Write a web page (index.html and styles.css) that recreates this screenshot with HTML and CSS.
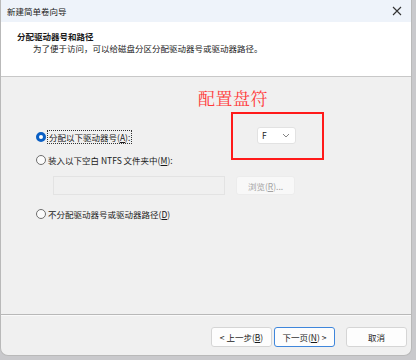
FILE: index.html
```html
<!DOCTYPE html>
<html lang="zh-CN">
    <head>
        <meta charset="UTF-8">
        <title> 新建简单卷向导 </title>
        <link rel="stylesheet" href="styles.css">
    </head>

    <body>
        <div class="window">
            <div class="titlebar">
                <span class="title">新建简单卷向导</span>
                <svg class="close" width="10" height="10" viewBox="0 0 10 10">
                    <path d="M1 1 L9 9 M9 1 L1 9" stroke="#333" stroke-width="1.1"/>
                </svg>
            </div>

            <div class="header">
                <div class="header-title">分配驱动器号和路径</div>
                <div class="header-sub">为了便于访问，可以给磁盘分区分配驱动器号或驱动器路径。</div>
            </div>

            <div class="content">
                <div class="note">配置盘符</div>
                <div class="note-box"> </div>

                <div class="row">
                    <div class="option">
                        <span class="radio checked"> </span>
                        <span class="focus">分配以下驱动器号(<u>A</u>):</span>
                    </div>
                    <div class="select">
                        <span>F</span>
                        <svg width="8" height="5" viewBox="0 0 8 5">
                            <path d="M1 1 L4 4 L7 1" fill="none" stroke="#777" stroke-width="0.9"/>
                        </svg>
                    </div>
                </div>

                <div class="row">
                    <div class="option">
                        <span class="radio"> </span>
                        <span>装入以下空白 NTFS 文件夹中(<u>M</u>):</span>
                    </div>
                </div>

                <div class="path-row">
                    <div class="path-input"> </div>
                    <div class="btn disabled">浏览(<u>R</u>)...</div>
                </div>

                <div class="row">
                    <div class="option">
                        <span class="radio"> </span>
                        <span>不分配驱动器号或驱动器路径(<u>D</u>)</span>
                    </div>
                </div>
            </div>

            <div class="footer">
                <div class="btn back">&lt; 上一步(<u>B</u>)</div>
                <div class="btn next">下一页(<u>N</u>) &gt;</div>
                <div class="btn cancel">取消</div>
            </div>
        </div>
    </body>
</html>
```

FILE: styles.css
```css
* {
    padding: 0;
    margin: 0;
    box-sizing: border-box;
}

body {
    background: #c9c9cc;
    font-family: "Noto Sans CJK SC", "Noto Sans", sans-serif;
    font-size: 8.5px;
    color: #1a1a1a;
    width: 416px;
    height: 360px;
    overflow: hidden;
}

.window {
    width: 412px;
    height: 356px;
    border: 1px solid #b9b9b9;
    border-top: none;
    border-radius: 0 0 8px 8px;
    overflow: hidden;
    display: flex;
    flex-direction: column;
    background: #f0f0f0;
}

.titlebar {
    height: 22px;
    background: #eef3fa;
    display: flex;
    align-items: center;
    justify-content: space-between;
    padding: 0 9px 0 6px;
    flex-shrink: 0;
}

.title {
    color: #222;
}

.header {
    height: 55px;
    background: #ffffff;
    border-bottom: 1px solid #c8c8c8;
    padding: 8px 0 0 16px;
    flex-shrink: 0;
}

.header-title {
    font-weight: bold;
    line-height: 12px;
}

.header-sub {
    padding-left: 16px;
    line-height: 12px;
    color: #222;
}

.content {
    position: relative;
    flex: 1;
    padding: 51px 0 0 35px;
}

.note {
    position: absolute;
    left: 197px;
    top: 8px;
    font-size: 17px;
    color: #ff3b3b;
    font-family: "Noto Serif CJK SC", "Noto Sans CJK SC", serif;
    letter-spacing: 0.5px;
}

.note-box {
    position: absolute;
    left: 230px;
    top: 35px;
    width: 93px;
    height: 48px;
    border: 2px solid #ff1a1a;
}

.row {
    display: flex;
    align-items: center;
    height: 18px;
}

.row + .row {
    margin-top: 5px;
}

.option {
    display: flex;
    align-items: center;
    gap: 2px;
    width: 221px;
}

.radio {
    width: 10px;
    height: 10px;
    border-radius: 50%;
    border: 1px solid #6e6e6e;
    background: #fbfbfb;
    flex-shrink: 0;
}

.radio.checked {
    border: 3px solid #0a5fc4;
    background: #ffffff;
}

.focus {
    outline: 1px dotted #333;
    padding: 0 1px;
}

.select {
    width: 39px;
    height: 17px;
    margin-top: -4px;
    background: #ffffff;
    border: 1px solid #e2e2e2;
    border-radius: 3px;
    display: flex;
    align-items: center;
    justify-content: space-between;
    padding: 0 5px 0 4px;
}

.path-row {
    display: flex;
    gap: 11px;
    margin: 7px 0 0 17px;
    height: 19px;
}

.path-input {
    width: 172px;
    border: 1px solid #e3e3e3;
    background: #f0f0f0;
}

.path-row + .row {
    margin-top: 10px;
}

.btn {
    display: flex;
    align-items: center;
    justify-content: center;
    background: #fdfdfd;
    border: 1px solid #d5d5d5;
    border-radius: 3px;
    color: #1a1a1a;
}

.btn.disabled {
    width: 59px;
    background: #f8f8f8;
    border-color: #ececec;
    color: #a3a3a3;
}

.footer {
    height: 41px;
    flex-shrink: 0;
    display: flex;
    padding: 12px 0 0 210px;
    border-top: 1px solid #b8b8b8;
    box-shadow: inset 0 1px 0 #fafafa;
}

.footer .btn {
    height: 20px;
    width: 61px;
}

.next {
    margin-left: 2px;
    border-color: #3f86db;
}

.cancel {
    margin-left: 11px;
}
```
